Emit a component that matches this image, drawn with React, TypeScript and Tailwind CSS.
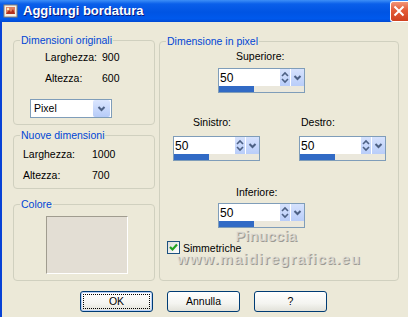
import React from "react";

const Chevron = ({ w = 13, h = 17 }: { w?: number; h?: number }) => (
  <svg width={w} height={h} viewBox={`0 0 ${w} ${h}`}>
    <path
      d={`M${w / 2 - 3} ${h / 2 - 1.5} L${w / 2} ${h / 2 + 1.5} L${w / 2 + 3} ${h / 2 - 1.5}`}
      fill="none"
      stroke="#4d6185"
      strokeWidth="2"
    />
  </svg>
);

const SpinBox = ({ value }: { value: string }) => (
  <div className="flex h-[25px] w-[87px] flex-col border border-[#7f9db9] bg-white">
    <div className="flex h-[17px]">
      <span className="flex-1 pl-[1px] text-[12px] leading-[18px]">{value}</span>
      <div className="flex w-[10px] items-center justify-center bg-[linear-gradient(#d6e2fd,#b9cdf9)]">
        <svg width="10" height="17" viewBox="0 0 10 17">
          <path d="M2 7 L5 4 L8 7" fill="none" stroke="#4d6185" strokeWidth="1.6" />
          <path d="M2 10 L5 13 L8 10" fill="none" stroke="#4d6185" strokeWidth="1.6" />
        </svg>
      </div>
      <div className="ml-[1px] flex w-[13px] items-center justify-center bg-[linear-gradient(#d6e2fd,#b9cdf9)]">
        <Chevron />
      </div>
    </div>
    <div className="h-[6px] bg-[#ebe8dc]">
      <div className="h-full w-[35px] bg-[#316ac5]" />
    </div>
  </div>
);

const Button = ({ label, focused }: { label: string; focused?: boolean }) => (
  <button
    className={`flex h-[21px] w-[73px] rounded-[3px] border border-[#003c74] bg-[linear-gradient(#ffffff,#f4f4f0_60%,#e2e1d9)] p-[2px] text-[10.5px] ${
      focused ? "shadow-[inset_0_0_0_1px_#b8d0f8]" : ""
    }`}
  >
    <span
      className={`flex flex-1 items-center justify-center border border-dotted ${
        focused ? "border-black" : "border-transparent"
      }`}
    >
      {label}
    </span>
  </button>
);

const Group = ({
  title,
  className,
  children,
}: {
  title: string;
  className: string;
  children: React.ReactNode;
}) => (
  <fieldset className={`rounded-[4px] border border-[#d0d0bf] ${className}`}>
    <legend className="ml-[6px] px-[1px] text-[10.5px] leading-[12px] text-[#0046d5]">{title}</legend>
    {children}
  </fieldset>
);

export default function App() {
  return (
    <div className="flex h-[317px] w-[408px] flex-col overflow-hidden bg-[#ece9d8] font-['Liberation_Sans',Arial,sans-serif] text-black">
      {/* title bar */}
      <div className="flex h-[22px] w-[408px] shrink-0 items-center justify-between bg-[linear-gradient(#3d8ff7_0%,#0a5fea_18%,#0054e3_55%,#0059ec_85%,#0049d3_100%)] pl-[3px]">
        <div className="flex items-center">
          <svg width="16" height="16" viewBox="0 0 16 16" className="shrink-0">
            <rect x="1" y="2" width="13" height="12" fill="#f4f1e8" stroke="#8a8070" />
            <rect x="3" y="4" width="9" height="7" fill="#e08060" />
            <path d="M3 11 L6 7 L8 9 L10 6 L12 11 Z" fill="#b03020" />
            <circle cx="5" cy="6" r="1.2" fill="#fff3c0" />
          </svg>
          <span className="ml-[4px] text-[13px] font-bold text-white [text-shadow:1px_1px_0_#0a1a80]">
            Aggiungi bordatura
          </span>
        </div>
        <div className="flex h-[21px] w-[18px] shrink-0 items-center rounded-l-[3px] border-y border-l border-white bg-[linear-gradient(#f29477,#e35a36_45%,#cf4120)] pl-[2px]">
          <svg width="12" height="12" viewBox="0 0 12 12">
            <path d="M1.5 1.5 L10.5 10.5 M10.5 1.5 L1.5 10.5" stroke="white" strokeWidth="2" />
          </svg>
        </div>
      </div>

      {/* body */}
      <div className="relative flex flex-1 flex-col border-l-2 border-[#0842d6] pl-[11px] pt-[12px]">
        <div className="flex gap-[4px]">
          <div className="flex w-[142px] flex-col">
            <Group title="Dimensioni originali" className="h-[91px]">
              <div className="grid grid-cols-[57px_1fr] gap-y-[9px] pl-[31px] pt-[5px] text-[10.5px] leading-[12px]">
                <span>Larghezza:</span>
                <span>900</span>
                <span>Altezza:</span>
                <span>600</span>
              </div>
              <div className="ml-[16px] mt-[15px] flex h-[19px] w-[82px] items-center border border-[#7f9db9] bg-white">
                <span className="flex-1 pl-[3px] text-[10.5px]">Pixel</span>
                <div className="mr-[1px] flex h-[17px] w-[17px] items-center justify-center rounded-[2px] bg-[linear-gradient(#dbe6fe,#b6cbf8)]">
                  <Chevron w={17} h={17} />
                </div>
              </div>
            </Group>

            <Group title="Nuove dimensioni" className="mt-[4px] h-[60px]">
              <div className="grid grid-cols-[69px_1fr] gap-y-[9px] pl-[9px] pt-[7px] text-[10.5px] leading-[12px]">
                <span>Larghezza:</span>
                <span>1000</span>
                <span>Altezza:</span>
                <span>700</span>
              </div>
            </Group>

            <Group title="Colore" className="mt-[9px] h-[83px]">
              <div className="ml-[32px] mt-[6px] h-[58px] w-[82px] border border-b-white border-l-[#a09c8f] border-r-white border-t-[#a09c8f] bg-[#e3ded4]" />
            </Group>
          </div>

          <Group title="Dimensione in pixel" className="mt-[1px] h-[246px] w-[240px]">
            <div className="flex flex-col text-[10.5px] leading-[12px]">
              <div className="ml-[58px] mt-[3px] flex flex-col">
                <span className="pl-[18px]">Superiore:</span>
                <div className="mt-[6px]">
                  <SpinBox value="50" />
                </div>
              </div>

              <div className="mt-[23px] flex">
                <div className="ml-[13px] flex flex-col">
                  <span className="pl-[20px]">Sinistro:</span>
                  <div className="mt-[8px]">
                    <SpinBox value="50" />
                  </div>
                </div>
                <div className="ml-[39px] flex flex-col">
                  <span className="pl-[2px]">Destro:</span>
                  <div className="mt-[8px]">
                    <SpinBox value="50" />
                  </div>
                </div>
              </div>

              <div className="ml-[58px] mt-[25px] flex flex-col">
                <span className="pl-[18px]">Inferiore:</span>
                <div className="mt-[5px]">
                  <SpinBox value="50" />
                </div>
              </div>

              <div className="ml-[7px] mt-[13px] flex items-center gap-[3px]">
                <div className="flex h-[13px] w-[13px] items-center justify-center border border-[#1c5180] bg-[linear-gradient(135deg,#dcdcd7,#ffffff)]">
                  <svg width="11" height="11" viewBox="0 0 11 11">
                    <path d="M2 5 L4.5 7.5 L9 2.5" fill="none" stroke="#21a121" strokeWidth="2.2" />
                  </svg>
                </div>
                <span>Simmetriche</span>
              </div>
            </div>
          </Group>
        </div>

        <div className="mt-[10px] flex gap-[14px] pl-[67px]">
          <Button label="OK" focused />
          <Button label="Annulla" />
          <Button label="?" />
        </div>

        {/* watermark */}
        <span className="pointer-events-none absolute left-[233px] top-[207px] text-[15px] font-bold leading-[13px] text-[#e6e3da]/80 [text-shadow:1px_1px_0_#9c9a94]">
          Pinuccia
        </span>
        <span className="pointer-events-none absolute left-[175px] top-[230px] text-[15px] font-bold leading-[13px] tracking-[1px] text-[#e6e3da]/80 [text-shadow:1px_1px_0_#9c9a94]">
          www.maidiregrafica.eu
        </span>
      </div>
    </div>
  );
}
